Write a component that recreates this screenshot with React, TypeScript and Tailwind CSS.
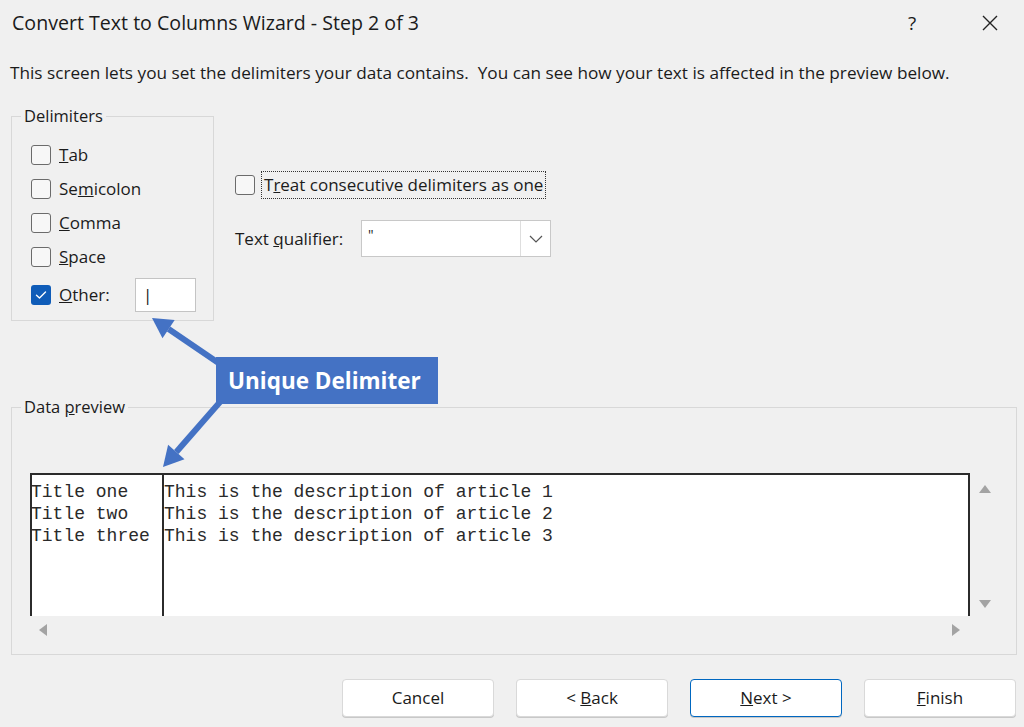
import React from "react";

function Box({ checked = false }: { checked?: boolean }) {
  if (checked) {
    return (
      <span className="flex h-[20px] w-[20px] shrink-0 items-center justify-center rounded-[3px] bg-[#0f5cb8]">
        <svg width="12" height="10" viewBox="0 0 12 10" fill="none">
          <path d="M1.5 5.2 L4.5 8 L10.5 2" stroke="white" strokeWidth="1.4" strokeLinecap="round" strokeLinejoin="round" />
        </svg>
      </span>
    );
  }
  return <span className="block h-[20px] w-[20px] shrink-0 rounded-[3px] border border-[#6b6b6b] bg-[#f7f7f7]" />;
}

function Row({ children, checked }: { children: React.ReactNode; checked?: boolean }) {
  return (
    <div className="flex h-[34px] items-center gap-[8px]">
      <Box checked={checked} />
      <span className="text-[17px] leading-[20px]">{children}</span>
    </div>
  );
}

function Btn({ children, primary }: { children: React.ReactNode; primary?: boolean }) {
  return (
    <button
      className={
        "flex h-[38px] w-[152px] items-center justify-center rounded-[4px] bg-white text-[17px] text-[#1a1a1a] shadow-[0_1px_0_#c8c8c8] " +
        (primary ? "border border-[#0067c0]" : "border border-[#d9d9d9]")
      }
    >
      <span className="whitespace-pre">{children}</span>
    </button>
  );
}

export default function App() {
  return (
    <div className="relative h-[727px] w-[1024px] overflow-hidden bg-[#f0f0f0] font-['Open_Sans',sans-serif] text-[#1b1b1b]">
      {/* Title bar */}
      <div className="flex h-[45px] items-center pl-[12px]">
        <div className="flex-1 text-[19.6px] leading-[24px]">Convert Text to Columns Wizard - Step 2 of 3</div>
        <div className="w-[20px] text-center text-[19px] leading-[24px]">?</div>
        <div className="ml-[56px] mr-[22px] flex w-[24px] items-center justify-center">
          <svg width="18" height="18" viewBox="0 0 18 18">
            <path d="M2 2 L16 16 M16 2 L2 16" stroke="#222" strokeWidth="1.4" />
          </svg>
        </div>
      </div>

      {/* Description */}
      <div className="mt-[18px] pl-[10px] text-[17.2px] leading-[20px]">
        This screen lets you set the delimiters your data contains.&nbsp; You can see how your text is affected in the preview below.
      </div>

      {/* Top row */}
      <div className="mt-[23px] flex items-start">
        <fieldset className="ml-[11px] w-[203px] border border-[#d8d8d8] pb-[8px] pl-[19px]">
          <legend className="ml-[-10px] px-[3px] text-[16.5px] leading-[20px]">Delimiters</legend>
          <div className="pt-[12px]">
            <Row>
              <u>T</u>ab
            </Row>
            <Row>
              Se<u>m</u>icolon
            </Row>
            <Row>
              <u>C</u>omma
            </Row>
            <Row>
              <u>S</u>pace
            </Row>
            <div className="mt-[4px] flex h-[34px] items-center">
              <Box checked />
              <span className="ml-[8px] w-[76px] text-[17px] leading-[20px]">
                <u>O</u>ther:
              </span>
              <div className="flex h-[34px] w-[61px] items-center border border-[#c4c4c4] bg-white pl-[7px]">
                <span className="text-[17px] leading-[20px]">|</span>
              </div>
            </div>
          </div>
        </fieldset>

        <div className="ml-[21px] mt-[65px]">
          <div className="flex h-[28px] items-center">
            <Box />
            <div className="ml-[6px] flex h-[28px] items-center border border-dotted border-[#333] px-[2px] text-[17px] leading-[20px]">
              <span>
                T<u>r</u>eat consecutive delimiters as one
              </span>
            </div>
          </div>
          <div className="mt-[21px] flex items-center">
            <span className="w-[126px] text-[17px] leading-[20px]">
              Text <u>q</u>ualifier:
            </span>
            <div className="flex h-[37px] w-[190px] border border-[#c8c8c8] bg-white">
              <div className="flex-1 pl-[6px] pt-[6px] text-[14px] leading-[16px]">"</div>
              <div className="flex w-[30px] items-center justify-center border-l border-[#dedede]">
                <svg width="14" height="8" viewBox="0 0 14 8" fill="none">
                  <path d="M1 1 L7 7 L13 1" stroke="#555" strokeWidth="1.2" />
                </svg>
              </div>
            </div>
          </div>
        </div>
      </div>

      {/* Data preview */}
      <fieldset className="ml-[11px] mt-[76px] w-[1006px] border border-[#d8d8d8] pb-[10px] pl-[18px]">
        <legend className="ml-[-9px] px-[3px] text-[16.5px] leading-[20px]">
          Data <u>p</u>review
        </legend>
        <div className="mt-[56px] flex">
          <div className="flex h-[143px] w-[940px] border-l-2 border-r-2 border-t-2 border-[#2b2b2b] bg-white pt-[6px] font-['Liberation_Mono',monospace] text-[18px] leading-[22px] text-[#2a2a2a]">
            <div className="ml-[-1px] w-[131px] whitespace-pre">
              <div>Title one</div>
              <div>Title two</div>
              <div>Title three</div>
            </div>
            <div className="mt-[-6px] w-[2px] self-stretch bg-[#2b2b2b]" />
            <div className="whitespace-pre">
              <div>This is the description of article 1</div>
              <div>This is the description of article 2</div>
              <div>This is the description of article 3</div>
            </div>
          </div>
          <div className="flex w-[30px] flex-col items-center justify-between pb-[8px] pt-[12px]">
            <svg width="12" height="8" viewBox="0 0 12 8">
              <path d="M6 0 L12 8 L0 8 Z" fill="#a3a3a3" />
            </svg>
            <svg width="12" height="8" viewBox="0 0 12 8">
              <path d="M0 0 L12 0 L6 8 Z" fill="#a3a3a3" />
            </svg>
          </div>
        </div>
        <div className="flex h-[28px] w-[940px] items-center justify-between pl-[9px] pr-[10px]">
          <svg width="8" height="12" viewBox="0 0 8 12">
            <path d="M8 0 L8 12 L0 6 Z" fill="#a3a3a3" />
          </svg>
          <svg width="8" height="12" viewBox="0 0 8 12">
            <path d="M0 0 L8 6 L0 12 Z" fill="#a3a3a3" />
          </svg>
        </div>
      </fieldset>

      {/* Buttons */}
      <div className="mt-[24px] flex justify-end gap-[22px] pr-[8px]">
        <Btn>Cancel</Btn>
        <Btn>
          {"< "}
          <u>B</u>ack
        </Btn>
        <Btn primary>
          <u>N</u>
          {"ext >"}
        </Btn>
        <Btn>
          <u>F</u>inish
        </Btn>
      </div>

      {/* Annotation */}
      <svg className="pointer-events-none absolute left-0 top-0" width="1024" height="727">
        <line x1="220" y1="364" x2="168.6" y2="329.1" stroke="#4472c4" strokeWidth="6" />
        <polygon points="152,318 174.7,319.9 162.5,338.3" fill="#4472c4" />
        <line x1="220" y1="402" x2="176.3" y2="452" stroke="#4472c4" strokeWidth="6" />
        <polygon points="163,467 184.5,459.3 168.1,444.7" fill="#4472c4" />
      </svg>
      <div className="absolute left-[216px] top-[357px] flex h-[47px] w-[222px] items-center bg-[#4472c4] pl-[12px] font-['Open_Sans',sans-serif] text-[22.5px] font-bold text-white">
        Unique Delimiter
      </div>
    </div>
  );
}
